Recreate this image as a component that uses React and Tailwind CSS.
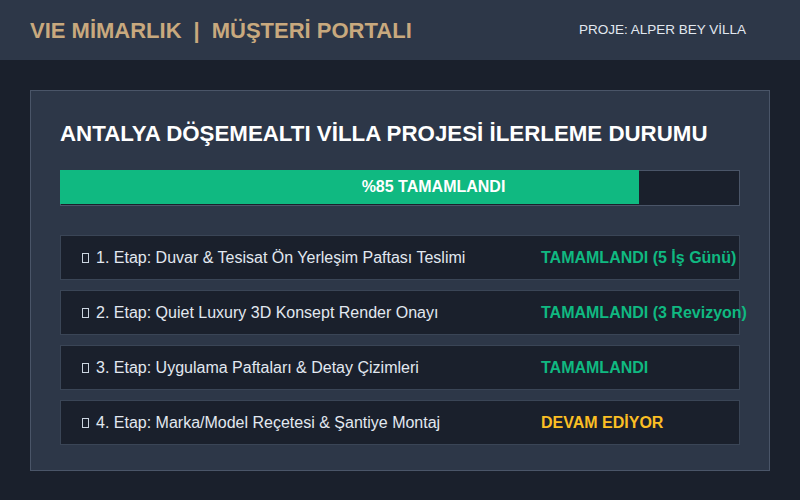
import React from "react";

const steps = [
  { label: "1. Etap: Duvar & Tesisat Ön Yerleşim Paftası Teslimi", status: "TAMAMLANDI (5 İş Günü)", done: true },
  { label: "2. Etap: Quiet Luxury 3D Konsept Render Onayı", status: "TAMAMLANDI (3 Revizyon)", done: true },
  { label: "3. Etap: Uygulama Paftaları & Detay Çizimleri", status: "TAMAMLANDI", done: true },
  { label: "4. Etap: Marka/Model Reçetesi & Şantiye Montaj", status: "DEVAM EDİYOR", done: false },
];

function Glyph() {
  return (
    <span className="inline-block w-[7px] h-[10px] border border-[#cbd5e0] mr-[7px] align-[0px]" />
  );
}

export default function App() {
  return (
    <div
      className="w-[800px] h-[500px] bg-[#1a202c] flex flex-col overflow-hidden"
      style={{ fontFamily: '"Liberation Sans", Arial, sans-serif' }}
    >
      <header className="h-[60px] shrink-0 bg-[#2d3748] flex items-center justify-between pl-[30px] pr-[54px]">
        <div className="text-[22px] font-bold text-[#c8a97e] whitespace-nowrap">
          VIE MİMARLIK<span className="mx-[12px]">|</span>MÜŞTERİ PORTALI
        </div>
        <div className="text-[13.5px] text-[#e2e8f0] whitespace-nowrap">
          PROJE: ALPER BEY VİLLA
        </div>
      </header>

      <main className="flex-1 px-[30px] pt-[30px] pb-[29px]">
        <section className="h-full bg-[#2d3748] border border-[#4a5568] px-[29px] pt-[28px]">
          <h1 className="text-[22.3px] font-bold text-white leading-[30px] whitespace-nowrap">
            ANTALYA DÖŞEMEALTI VİLLA PROJESİ İLERLEME DURUMU
          </h1>

          <div className="mt-[21px] h-[36px] bg-[#1a202c] border border-[#4a5568] flex">
            <div className="w-[579px] h-full bg-[#10b981] flex items-center justify-center pl-[168px] text-[16px] font-bold text-white whitespace-nowrap -my-px -ml-px">
              %85 TAMAMLANDI
            </div>
          </div>

          <ul className="mt-[29px] flex flex-col gap-[10px]">
            {steps.map((s) => (
              <li
                key={s.label}
                className="h-[45px] bg-[#1a202c] border border-[#3a4556] flex items-center pl-[21px] text-[16px]"
              >
                <span className="w-[459px] shrink-0 text-[#e2e8f0] whitespace-nowrap">
                  <Glyph />
                  {s.label}
                </span>
                <span
                  className={
                    "font-bold whitespace-nowrap " +
                    (s.done ? "text-[#10b981]" : "text-[#fbbf24]")
                  }
                >
                  {s.status}
                </span>
              </li>
            ))}
          </ul>
        </section>
      </main>
    </div>
  );
}
